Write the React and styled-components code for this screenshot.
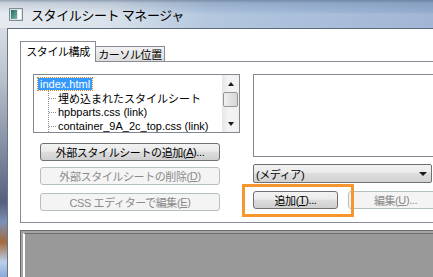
import React from "react"
import styled, { createGlobalStyle } from "styled-components"

const GlobalStyle = createGlobalStyle`
    html, body {
        margin: 0;
        padding: 0;
        overflow: hidden;
        background: #fff;
    }

    body {
        font-family: "Liberation Sans", "Noto Sans CJK JP", sans-serif;
        font-size: 11px;
        color: #000;
    }
`

const TitleIcon = () => (
    <svg width="14" height="13" viewBox="0 0 14 13">
        <defs>
            <linearGradient id="ti" x1="0" y1="0" x2="1" y2="1">
                <stop offset="0" stopColor="#1f6a64" />
                <stop offset="1" stopColor="#7fb8a4" />
            </linearGradient>
        </defs>
        <rect x="0.5" y="0.5" width="13" height="12" fill="#dfe6ea" stroke="#7f8c98" />
        <rect x="2" y="2" width="6" height="9" fill="url(#ti)" />
        <rect x="9" y="2" width="3" height="9" fill="#fff" />
    </svg>
)

const Connector = () => (
    <svg width="10" height="14" viewBox="0 0 10 14">
        <line x1="0.5" y1="0" x2="0.5" y2="14" stroke="#8a8a8a" strokeDasharray="1 1" />
        <line x1="1" y1="7.5" x2="9" y2="7.5" stroke="#8a8a8a" strokeDasharray="1 1" />
    </svg>
)

const Arrow = ({ up, size = 7 }) => (
    <svg width={size} height="4" viewBox={`0 0 ${size} 4`}>
        {up ? (
            <polygon points={`0,4 ${size},4 ${size / 2},0`} fill="#1a1a1a" />
        ) : (
            <polygon points={`0,0 ${size},0 ${size / 2},4`} fill="#1a1a1a" />
        )}
    </svg>
)

const children = [
    "埋め込まれたスタイルシート",
    "hpbparts.css (link)",
    "container_9A_2c_top.css (link)",
]

export default () => (
    <Window>
        <GlobalStyle />
        <TitleBar>
            <TitleIcon />
            <Title>スタイルシート マネージャ</Title>
        </TitleBar>
        <Frame>
            <LeftEdge />
            <Client>
                <TabRow>
                    <Tab active>スタイル構成</Tab>
                    <Tab>カーソル位置</Tab>
                </TabRow>
                <Panel>
                    <Column>
                        <Tree>
                            <TreeItems>
                                <TreeRow>
                                    <Selected>index.html</Selected>
                                </TreeRow>
                                {children.map((c) => (
                                    <TreeRow key={c} child>
                                        <Connector />
                                        <span>{c}</span>
                                    </TreeRow>
                                ))}
                            </TreeItems>
                            <ScrollBar>
                                <ScrollArrow>
                                    <Arrow up size={6} />
                                </ScrollArrow>
                                <Thumb />
                                <ScrollTrack />
                                <ScrollArrow>
                                    <Arrow size={6} />
                                </ScrollArrow>
                            </ScrollBar>
                        </Tree>
                        <Button wide top={10}>
                            外部スタイルシートの追加(<u>A</u>)...
                        </Button>
                        <Button wide disabled top={6}>
                            外部スタイルシートの削除(<u>D</u>)
                        </Button>
                        <Button wide disabled top={8}>
                            CSS エディターで編集(<u>E</u>)
                        </Button>
                    </Column>
                    <Column>
                        <MediaBox />
                        <Select>
                            <span>(メディア)</span>
                            <Arrow size={8} />
                        </Select>
                        <ButtonRow>
                            <Marked>
                                <Button width={85}>
                                    追加(<u>T</u>)...
                                </Button>
                                <Highlight />
                            </Marked>
                            <Button width={95} disabled>
                                編集(<u>U</u>)...
                            </Button>
                        </ButtonRow>
                    </Column>
                </Panel>
                <Preview>
                    <PreviewInner />
                </Preview>
            </Client>
        </Frame>
    </Window>
)

const Window = styled.div`
    width: 433px;
    height: 277px;
    display: flex;
    flex-direction: column;
    overflow: hidden;
`

const TitleBar = styled.div`
    height: 28px;
    flex: none;
    display: flex;
    align-items: center;
    gap: 8px;
    padding-left: 9px;
    background:
        linear-gradient(to bottom, rgba(60, 80, 110, 0.45) 0px, rgba(60, 80, 110, 0.15) 3px, rgba(255, 255, 255, 0) 12px, rgba(255, 255, 255, 0.12) 14px),
        linear-gradient(to right, #e2e8ee 0%, #d4dee8 25%, #a9bfda 48%, #9fb7d6 70%, #93acce 100%);
`

const Title = styled.span`
    font-family: "Noto Sans CJK JP", sans-serif;
    font-size: 13px;
    letter-spacing: -0.4px;
    margin-top: 1px;
`

const Frame = styled.div`
    flex: 1;
    display: flex;
    min-height: 0;
`

const LeftEdge = styled.div`
    width: 7px;
    flex: none;
    border-right: 1px solid #6c7484;
    background: linear-gradient(
        to bottom,
        #d7dde4 0%,
        #b9c2cc 20%,
        #7f8aa0 50%,
        #56607e 70%,
        #7c90b8 78%,
        #a56a3c 86%,
        #b9d0ec 94%,
        #8aa8d8 100%
    );
`

const Client = styled.div`
    flex: 1;
    min-width: 0;
    display: flex;
    flex-direction: column;
    background: #fff;
    border-top: 1px solid #5f6a7c;
    padding: 12px 0 0 12px;
    overflow: hidden;
`

const TabRow = styled.div`
    height: 21px;
    display: flex;
    align-items: flex-end;
    position: relative;
    z-index: 1;
    margin-bottom: -1px;
`

const Tab = styled.div`
    box-sizing: border-box;
    display: flex;
    align-items: center;
    justify-content: center;
    border: 1px solid #898c95;
    border-bottom: none;
    letter-spacing: -0.4px;
    ${({ active }) =>
        active
            ? `
        width: 76px;
        height: 21px;
        background: #fff;
        padding-bottom: 2px;
    `
            : `
        width: 69px;
        height: 15px;
        margin-bottom: 1px;
        border-left: none;
        background: linear-gradient(#f3f3f3, #dcdcdc);
    `}
`

const Panel = styled.div`
    box-sizing: border-box;
    width: 460px;
    height: 162px;
    flex: none;
    border: 1px solid #898c95;
    padding: 12px 0 0 12px;
    display: grid;
    grid-template-columns: 207px 1fr;
    column-gap: 13px;
    align-items: start;
`

const Column = styled.div`
    display: flex;
    flex-direction: column;
`

const Tree = styled.div`
    box-sizing: border-box;
    height: 59px;
    border: 1px solid #828790;
    display: flex;
    overflow: hidden;
`

const TreeItems = styled.div`
    flex: 1;
    padding-top: 2px;
    white-space: nowrap;
    overflow: hidden;
`

const TreeRow = styled.div`
    height: 14px;
    display: flex;
    align-items: center;
    padding-left: ${({ child }) => (child ? "14px" : "4px")};
    letter-spacing: 0;

    svg {
        flex: none;
    }
`

const Selected = styled.span`
    background: #3399ff;
    color: #fff;
    padding: 0 2px;
    height: 12px;
    line-height: 12px;
    outline: 1px dotted #e0882c;
`

const ScrollBar = styled.div`
    width: 17px;
    flex: none;
    display: flex;
    flex-direction: column;
    align-items: center;
    background: linear-gradient(to right, #e6e6e6, #f4f4f4 40%, #f0f0f0);
`

const ScrollArrow = styled.div`
    height: 17px;
    display: flex;
    align-items: center;
    justify-content: center;
    flex: none;
`

const Thumb = styled.div`
    box-sizing: border-box;
    width: 15px;
    height: 15px;
    flex: none;
    border: 1px solid #979797;
    border-radius: 2px;
    background: linear-gradient(to right, #f0f0f0, #e2e2e2 50%, #d6d6d6);
`

const ScrollTrack = styled.div`
    flex: 1;
`

const Button = styled.div`
    box-sizing: border-box;
    height: 18px;
    width: ${({ width, wide }) => (wide ? "180px" : `${width}px`)};
    margin-left: ${({ wide }) => (wide ? "7px" : "0")};
    margin-top: ${({ top = 0 }) => top}px;
    display: flex;
    align-items: center;
    justify-content: center;
    flex: none;
    border-radius: 3px;
    letter-spacing: -0.4px;
    white-space: nowrap;
    border: 1px solid ${({ disabled }) => (disabled ? "#b4c0c0" : "#707070")};
    color: ${({ disabled }) => (disabled ? "#8a8a8a" : "#000")};
    background: ${({ disabled }) =>
        disabled
            ? "#f4f4f4"
            : "linear-gradient(#f2f2f2 0%, #ebebeb 45%, #dddddd 50%, #cfcfcf 100%)"};
`

const MediaBox = styled.div`
    box-sizing: border-box;
    height: 83px;
    border: 1px solid #828790;
`

const Select = styled.div`
    box-sizing: border-box;
    width: 179px;
    height: 19px;
    margin-top: 7px;
    display: flex;
    align-items: center;
    justify-content: space-between;
    padding: 0 4px 0 2px;
    border: 1px solid #707070;
    border-radius: 2px;
    background: linear-gradient(#f2f2f2 0%, #ebebeb 45%, #dddddd 50%, #d2d2d2 100%);
    letter-spacing: -0.4px;
`

const ButtonRow = styled.div`
    display: flex;
    gap: 10px;
    margin-top: 8px;
`

const Marked = styled.div`
    position: relative;
`

const Highlight = styled.div`
    position: absolute;
    left: -11px;
    top: -7px;
    width: 112px;
    height: 33px;
    box-sizing: border-box;
    border: 3px solid #f7962e;
    pointer-events: none;
`

const Preview = styled.div`
    margin-top: 7px;
    flex: 1;
    width: 460px;
    border: 1px solid #6a6a6a;
    border-bottom: none;
    background: #a4a4a4;
    padding: 2px 0 0 2px;
    display: flex;
`

const PreviewInner = styled.div`
    flex: 1;
    border-top: 1px solid #6e6e6e;
    border-left: 2px solid #fff;
    background: #999999;
`
